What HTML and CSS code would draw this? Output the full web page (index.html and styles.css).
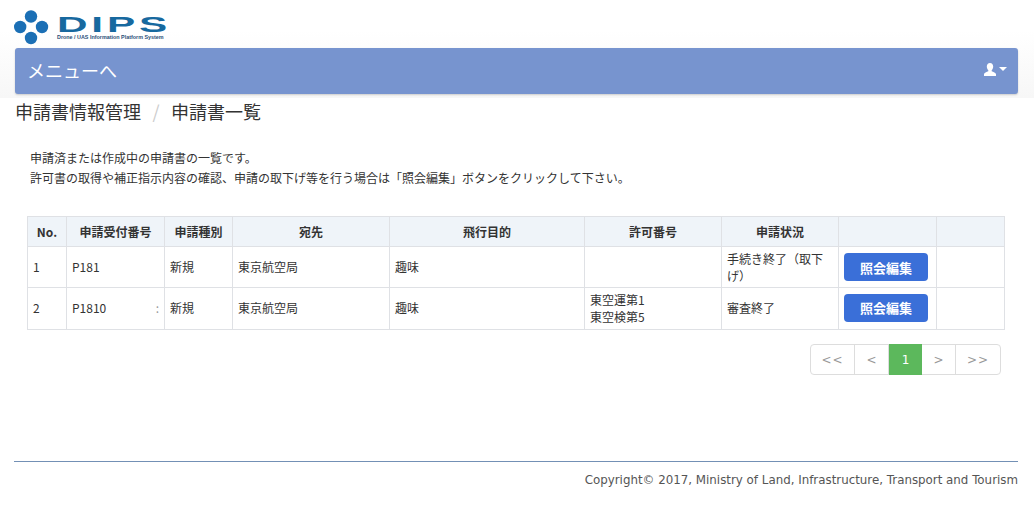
FILE: index.html
```html
<!DOCTYPE html>
<html lang="ja">
<head>
<meta charset="utf-8">
<title>申請書一覧</title>
<link rel="stylesheet" href="styles.css">
</head>
<body>
<div class="top">
  <header class="logo">
    <svg class="logo-mark" width="36" height="38" viewBox="0 0 36 38"><g fill="#1b6fb5"><circle cx="17" cy="7.500" r="6.200"/><circle cx="6.200" cy="18" r="6.200"/><circle cx="28" cy="18" r="6.200"/><circle cx="17" cy="29" r="6.200"/></g></svg>
    <div class="logo-text">
      <div class="logo-name">DIPS</div>
      <div class="logo-tag">Drone / UAS Information Platform System</div>
    </div>
  </header>
  <nav class="navbar">
    <span class="nav-title">メニューへ</span>
    <span class="nav-user">
      <svg width="14" height="13" viewBox="0 0 14 13"><path fill="#fff" d="M7 0c2 0 3.200 1.500 3.200 3.600 0 1.500-.6 2.900-1.500 3.600v1.100c1.500.7 4.300 1.400 4.300 3V13H1v-1.700c0-1.600 2.800-2.300 4.300-3V7.200C4.400 6.500 3.800 5.100 3.800 3.600 3.800 1.500 5 0 7 0z"/></svg>
      <span class="caret"></span>
    </span>
  </nav>
</div>
<main class="content">
  <h1 class="crumb"><span>申請書情報管理</span><span class="sep">/</span><span>申請書一覧</span></h1>
  <div class="intro">
    <p>申請済または作成中の申請書の一覧です。</p>
    <p>許可書の取得や補正指示内容の確認、申請の取下げ等を行う場合は「照会編集」ボタンをクリックして下さい。</p>
  </div>
  <table class="list">
    <colgroup>
      <col class="c1"><col class="c2"><col class="c3"><col class="c4"><col class="c5"><col class="c6"><col class="c7"><col class="c8"><col class="c9">
    </colgroup>
    <thead>
      <tr><th>No.</th><th>申請受付番号</th><th>申請種別</th><th>宛先</th><th>飛行目的</th><th>許可番号</th><th>申請状況</th><th></th><th></th></tr>
    </thead>
    <tbody>
      <tr class="r1">
        <td>1</td><td>P181</td><td>新規</td><td>東京航空局</td><td>趣味</td><td></td><td class="status">手続き終了（取下げ）</td>
        <td class="btn-cell"><button class="btn" type="button">照会編集</button></td><td></td>
      </tr>
      <tr class="r2">
        <td>2</td><td><span class="rec"><span>P1810</span><span class="rec-end">:</span></span></td><td>新規</td><td>東京航空局</td><td>趣味</td>
        <td><div class="permit">東空運第1</div><div class="permit">東空検第5</div></td><td>審査終了</td>
        <td><button class="btn" type="button">照会編集</button></td><td></td>
      </tr>
    </tbody>
  </table>
  <div class="pager-row">
    <ul class="pager">
      <li class="w1">&lt;&lt;</li><li class="w2">&lt;</li><li class="on">1</li><li class="w2">&gt;</li><li class="w1">&gt;&gt;</li>
    </ul>
  </div>
</main>
<footer class="foot">Copyright© 2017, Ministry of Land, Infrastructure, Transport and Tourism</footer>
</body>
</html>
```
FILE: styles.css
```css
* { box-sizing: border-box; }
html, body { margin: 0; padding: 0; }
body {
  width: 1034px;
  height: 510px;
  overflow: hidden;
  background: #fff;
  color: #333;
  font-family: "Noto Sans CJK JP", "Noto Sans", sans-serif;
  font-size: 12px;
}
.top {
  height: 98px;
  padding: 0 16px 0 15px;
  background: linear-gradient(#fff 0, #fff 30px, #f7f7f7 98px);
}
.logo { height: 48px; display: flex; align-items: flex-start; padding-top: 9px; margin-left: -1px; }
.logo-mark { flex: none; }
.logo-text { margin: 7px 0 0 7px; width: 108px; }
.logo-name {
  height: 18px;
  font: 700 22px/18px "Liberation Sans", sans-serif;
  letter-spacing: 2px;
  color: #17699f;
  transform: scaleX(1.92);
  transform-origin: left center;
}
.logo-tag {
  font: 700 5.400px/7px "Liberation Sans", sans-serif;
  color: #2a4f78;
  white-space: nowrap;
}
.navbar {
  height: 46px;
  background: #7794cf;
  border-radius: 3px;
  box-shadow: 0 1px 2px rgba(0,0,0,.18);
  display: flex;
  align-items: center;
  justify-content: space-between;
  padding: 0 11px 3px 12px;
  color: #fff;
}
.nav-title { font-size: 18px; }
.nav-user { display: flex; align-items: center; gap: 2px; margin-top: -1px; }
.caret { width: 0; height: 0; border: 4px solid transparent; border-top-color: #fff; border-bottom: 0; }
.content { padding: 0 29px 0 27px; }
.crumb {
  margin: 1px 0 0 -12px;
  height: 25px;
  font-size: 18px;
  line-height: 25px;
  font-weight: 400;
  color: #333;
  display: flex;
}
.sep { color: #ccc; width: 30px; text-align: center; }
.intro { margin: 24px 0 0 3px; }
.intro p { margin: 0; line-height: 20px; font-size: 12px; }
.list {
  margin-top: 28px;
  width: 977px;
  border-collapse: collapse;
  table-layout: fixed;
  font-size: 12px;
}
.c1 { width: 39px; } .c2 { width: 98px; } .c3 { width: 68px; } .c4 { width: 157px; } .c5 { width: 195px; }
.c6 { width: 137px; } .c7 { width: 117px; } .c8 { width: 98px; } .c9 { width: 68px; }
.list th, .list td { border: 1px solid #dfe1e5; padding: 0 5px; }
.list th { height: 30px; background: #eff4f9; font-weight: 700; text-align: center; color: #333; }
.list td { line-height: 17px; padding-bottom: 2px; }
.list .status { padding-bottom: 0; }
.list .btn-cell { padding-bottom: 0; }
.r1 td { height: 41px; }
.r2 td { height: 42px; }
.rec { display: flex; justify-content: space-between; }
.rec-end { color: #999; }
.permit { white-space: nowrap; }
.btn {
  display: block;
  width: 84px;
  height: 28px;
  border: 0;
  border-radius: 4px;
  background: #3a6fd8;
  color: #fff;
  font: 700 13px "Noto Sans CJK JP", sans-serif;
  padding: 0;
}
.pager-row { display: flex; justify-content: flex-end; padding: 14px 4px 0 0; }
.pager {
  display: flex;
  list-style: none;
  margin: 0;
  padding: 0;
  height: 31px;
  border: 1px solid #ddd;
  border-radius: 4px;
  color: #999;
  font-family: "DejaVu Sans", sans-serif;
  font-size: 12px;
}
.pager li { display: flex; align-items: center; justify-content: center; border-right: 1px solid #ddd; }
.pager li:last-child { border-right: 0; }
.w1 { width: 44px; letter-spacing: 1px; }
.w2 { width: 34px; }
.pager .on { width: 33px; background: #5cb85c; color: #fff; border-right: 0; margin: -1px 0; }
.foot {
  margin: 86px 16px 0 14px;
  border-top: 1px solid #7390b5;
  padding-top: 10px;
  text-align: right;
  font-family: "DejaVu Sans", sans-serif;
  font-size: 11.850px;
  line-height: 17px;
  color: #555;
}
```
